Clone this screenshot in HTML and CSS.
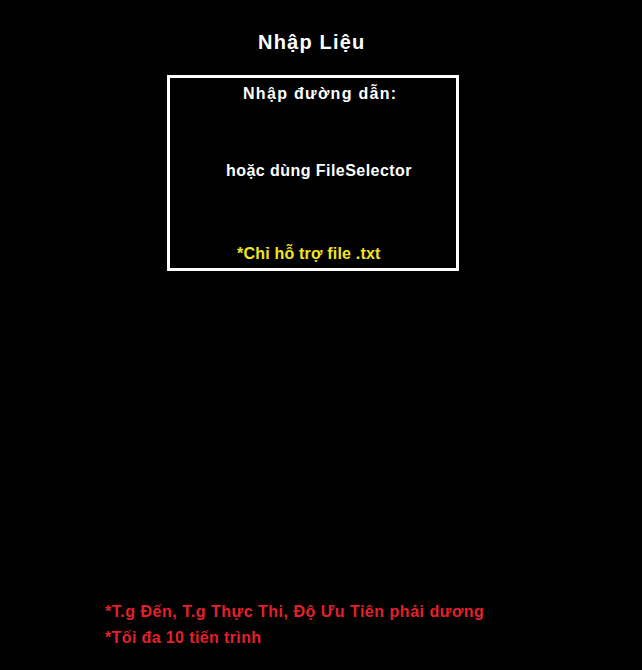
FILE: index.html
```html
<!DOCTYPE html>
<html lang="vi">
<head>
<meta charset="utf-8">
<title>Nhập Liệu</title>
<link rel="stylesheet" href="styles.css">
</head>
<body>
<main class="page">
  <h1 class="title">Nhập Liệu</h1>
  <section class="input-box">
    <div class="row row-path">Nhập đường dẫn:</div>
    <div class="row row-or">hoặc dùng FileSelector</div>
    <div class="row row-note">*Chỉ hỗ trợ file .txt</div>
  </section>
  <footer class="notes">
    <p class="note">*T.g Đến, T.g Thực Thi, Độ Ưu Tiên phải dương</p>
    <p class="note note-short">*Tối đa 10 tiến trình</p>
  </footer>
</main>
</body>
</html>
```

FILE: styles.css
```css
html, body {
  margin: 0;
  padding: 0;
  background: #000;
}
.page {
  width: 642px;
  height: 670px;
  display: flex;
  flex-direction: column;
  font-family: "Liberation Sans", Arial, sans-serif;
  font-weight: bold;
  color: #fff;
}
.title {
  margin: 30px 0 0 258px;
  font-size: 20px;
  line-height: 24px;
  font-weight: bold;
  letter-spacing: 1.2px;
}
.input-box {
  margin: 21px 0 0 167px;
  width: 286px;
  height: 190px;
  border: 3px solid #fff;
  display: flex;
  flex-direction: column;
  font-size: 16px;
  letter-spacing: 0.5px;
}
.row {
  line-height: 20px;
}
.row-path {
  margin-top: 6px;
  padding-left: 73px;
  letter-spacing: 1.3px;
}
.row-or {
  margin-top: 57px;
  padding-left: 56px;
  letter-spacing: 0.45px;
}
.row-note {
  margin-top: auto;
  margin-bottom: 4px;
  padding-left: 67px;
  color: #f2e51e;
  letter-spacing: 0.2px;
}
.notes {
  margin-top: auto;
  margin-bottom: 19px;
  padding-left: 105px;
  color: #e3202b;
  font-size: 16px;
  letter-spacing: 0.52px;
}
.note {
  margin: 0;
  line-height: 26px;
}
.note-short {
  letter-spacing: 0.38px;
}
```
